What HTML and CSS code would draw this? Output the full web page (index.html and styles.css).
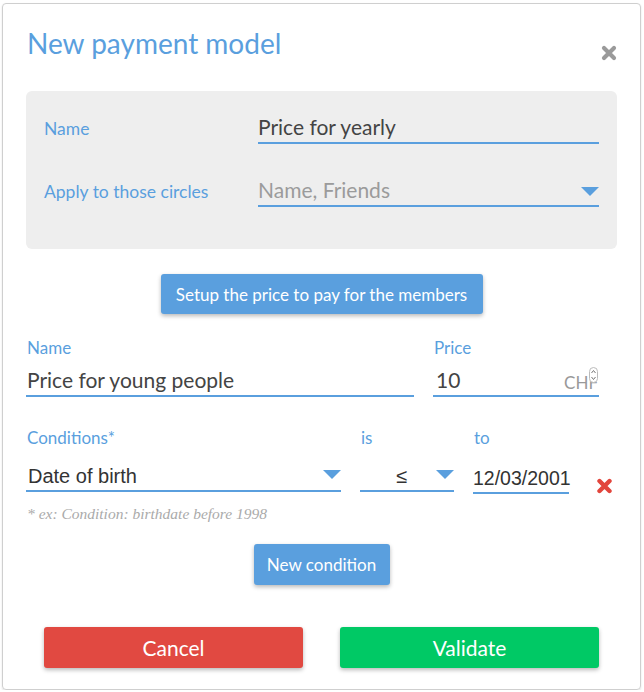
FILE: index.html
```html
<!DOCTYPE html>
<html>
<head>
<meta charset="utf-8">
<link rel="stylesheet" href="styles.css">
</head>
<body>
<div class="modal">
  <div class="header">
    <h1 class="title">New payment model</h1>
    <svg class="close" width="16" height="16" viewBox="0 0 16 16"><path d="M3 3 L13 13 M13 3 L3 13" stroke="#9a9a9a" stroke-width="4.2" stroke-linecap="round"/></svg>
  </div>

  <div class="panel">
    <div class="prow">
      <div class="plabel">Name</div>
      <div class="field pfield"><span class="val">Price for yearly</span></div>
    </div>
    <div class="prow">
      <div class="plabel">Apply to those circles</div>
      <div class="field pfield"><span class="val ph">Name, Friends</span><span class="tri tri-p"></span></div>
    </div>
  </div>

  <div class="center setup-wrap"><button class="btn blue setup">Setup the price to pay for the members</button></div>

  <div class="row2">
    <div class="col">
      <div class="label">Name</div>
      <div class="field f2"><span class="val">Price for young people</span></div>
    </div>
    <div class="col">
      <div class="label">Price</div>
      <div class="field f2 price"><span class="val">10</span><span class="chf">CHF</span><svg class="spin" width="9" height="16" viewBox="0 0 9 16"><rect x="0.5" y="0.5" width="8" height="15" rx="4" fill="#fff" stroke="#bbb"/><path d="M2.5 6 L4.5 3.5 L6.5 6 M2.5 10 L4.5 12.5 L6.5 10" fill="none" stroke="#777" stroke-width="1"/></svg></div>
    </div>
  </div>

  <div class="row3">
    <div class="label">Conditions*</div>
    <div class="label">is</div>
    <div class="label">to</div>
    <div></div>
    <div class="field f3"><span class="val arial">Date of birth</span><span class="tri"></span></div>
    <div class="field f3 center-val"><span class="val arial le">≤</span><span class="tri"></span></div>
    <div class="field f3 date"><span class="val arial">12/03/2001</span></div>
    <svg class="del" width="17" height="16" viewBox="0 0 17 16"><path d="M3.5 3 L13.5 13 M13.5 3 L3.5 13" stroke="#e2453c" stroke-width="4.4" stroke-linecap="round"/></svg>
  </div>

  <div class="hint">* ex: Condition: birthdate before 1998</div>

  <div class="center newc-wrap"><button class="btn blue newc">New condition</button></div>

  <div class="actions">
    <button class="btn big red">Cancel</button>
    <button class="btn big green">Validate</button>
  </div>
</div>
</body>
</html>
```

FILE: styles.css
```css
* { box-sizing: border-box; }
html, body { margin: 0; padding: 0; background: #fff; }
body { font-family: Lato, "Open Sans", sans-serif; }

.modal {
  margin: 3px 0 0 2px;
  width: 639px;
  height: 687px;
  border: 1px solid #cfcfcf;
  border-radius: 4px;
  padding: 0 23px;
  box-shadow: 0 1px 2px rgba(0,0,0,0.12);
}

.header {
  display: flex;
  justify-content: space-between;
  align-items: flex-start;
  height: 87px;
}
.title {
  margin: 21px 0 0 1px;
  font-weight: 400;
  font-size: 28px;
  line-height: 36px;
  color: #5a9fde;
}
.close { margin: 41px 0 0 0; }

.panel {
  background: #eeeeee;
  border-radius: 6px;
  padding: 19px 18px 42px 18px;
  display: flex;
  flex-direction: column;
  gap: 29px;
}
.prow { display: flex; align-items: center; }
.plabel {
  width: 214px;
  font-size: 17.5px;
  color: #5a9fde;
  padding-top: 2px;
}
.field {
  position: relative;
  border-bottom: 2px solid #5a9fde;
  display: flex;
  align-items: center;
}
.pfield { flex: 1; height: 34px; }
.val {
  font-size: 21px;
  color: #444;
}
.ph { color: #9b9b9b; }
.arial { font-family: "Liberation Sans", Arial, sans-serif; font-size: 20px; color: #333; }

.tri {
  margin-left: auto;
  width: 0; height: 0;
  border-left: 9px solid transparent;
  border-right: 9px solid transparent;
  border-top: 9px solid #5a9fde;
}
.tri-p { margin-right: 0; margin-top: 4px; }

.center { display: flex; justify-content: center; }
.setup-wrap { margin-top: 25px; }
.btn {
  border: none;
  border-radius: 3px;
  color: #fff;
  font-family: Lato, "Open Sans", sans-serif;
  box-shadow: 0 2px 4px rgba(0,0,0,0.28);
  padding: 0;
}
.blue { background: #5a9fde; }
.setup { width: 322px; height: 40px; font-size: 17px; }

.row2 {
  display: grid;
  grid-template-columns: 388px 166px;
  column-gap: 19px;
  margin-top: 24px;
}
.col { display: flex; flex-direction: column; }
.label {
  font-size: 17px;
  line-height: 20px;
  color: #5a9fde;
  padding-left: 1px;
}
.f2 { height: 34px; margin-top: 5px; padding-left: 1px; }
.f2 .val { font-size: 21px; }
.price .val { padding-left: 2px; }
.chf {
  margin-left: auto;
  font-size: 17px;
  color: #999;
  margin-right: 1px;
  margin-top: 6px;
}
.spin { position: absolute; right: 1px; top: 4px; }

.row3 {
  display: grid;
  grid-template-columns: 315px 94px 97px 1fr;
  column-gap: 19px;
  row-gap: 10px;
  margin-top: 31px;
  align-items: end;
}
.row3 .label { padding-left: 1px; }
.f3 { height: 34px; padding-left: 2px; align-items: flex-end; padding-bottom: 2px; }
.f3 .tri { align-self: center; margin-top: 2px; }
.center-val .val { margin-left: 34px; }
.le { font-size: 20px; }
.date { margin-bottom: -2px; width: 96px; padding-left: 0; }
.date .val { font-size: 19.5px; margin-left: 0; }
.del { margin: 0 0 -2px 7px; }

.hint {
  margin-top: 13px;
  font-family: "Liberation Serif", "Times New Roman", serif;
  font-style: italic;
  font-size: 15.5px;
  color: #aaa;
  padding-left: 1px;
}

.newc-wrap { margin-top: 21px; }
.newc { width: 136px; height: 41px; font-size: 17px; }

.actions {
  display: flex;
  justify-content: space-between;
  padding: 0 18px;
  margin-top: 42px;
}
.big { width: 259px; height: 41px; font-size: 21px; }
.red { background: #e14941; }
.green { background: #00c965; }
```
